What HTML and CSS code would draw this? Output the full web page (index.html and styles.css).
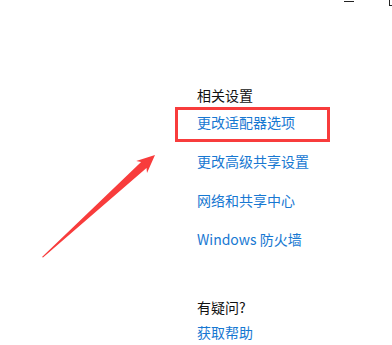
FILE: index.html
```html
<!DOCTYPE html>
<html>
<head>
  <meta charset="utf-8">
  <title>网络和 Internet</title>
  <link rel="stylesheet" href="styles.css">
</head>
<body>

<div class="window-controls">
  <span class="min-btn"></span>
  <span class="max-btn"></span>
</div>

<div class="panel">
  <div class="section">
    <h3 class="section-title">相关设置</h3>
    <div class="link-list">
      <a class="link highlighted" href="#">更改适配器选项</a>
      <a class="link" href="#">更改高级共享设置</a>
      <a class="link" href="#">网络和共享中心</a>
      <a class="link" href="#">Windows 防火墙</a>
    </div>
  </div>

  <div class="section help">
    <h3 class="section-title">有疑问?</h3>
    <div class="link-list">
      <a class="link" href="#">获取帮助</a>
    </div>
  </div>
</div>

<!-- annotation arrow -->
<svg class="arrow" width="392" height="345" viewBox="0 0 392 345">
  <polygon points="42,257 141.1,162.1 136.2,161.1 155,155 147,173 146.5,168.1 43,257.5" fill="#f83c3c"/>
</svg>

</body>
</html>
```

FILE: styles.css
```css
body {
  margin: 0;
  padding: 0;
  background: white;
  font-family: "Noto Sans CJK SC", "Noto Sans", sans-serif;
  font-size: 14px;
  line-height: 20px;
  position: relative;
  width: 392px;
  height: 345px;
  overflow: hidden;
}

.window-controls {
  position: absolute;
  top: 0;
  right: 0;
  width: 60px;
  height: 10px;
}

.min-btn {
  position: absolute;
  left: 12px;
  top: 1px;
  width: 10px;
  height: 1px;
  background: #222;
}

.max-btn {
  position: absolute;
  left: 57px;
  top: -6px;
  width: 10px;
  height: 10px;
  border: 1px solid #222;
}

.panel {
  padding: 85px 0 0 197px;
}

.section-title {
  margin: 0;
  font-size: 14px;
  font-weight: normal;
  color: #111;
}

.link-list {
  display: flex;
  flex-direction: column;
  align-items: flex-start;
  gap: 19px;
  margin-top: 7px;
}

.help .link-list {
  margin-top: 5px;
}

.link {
  color: #1778d2;
  text-decoration: none;
}

.highlighted {
  position: relative;
}

.highlighted::after {
  content: "";
  position: absolute;
  left: -22px;
  top: -5px;
  width: 149px;
  height: 29px;
  border: 3px solid #f83c3c;
}

.help {
  margin-top: 48px;
}

.arrow {
  position: absolute;
  left: 0;
  top: 0;
}
```
